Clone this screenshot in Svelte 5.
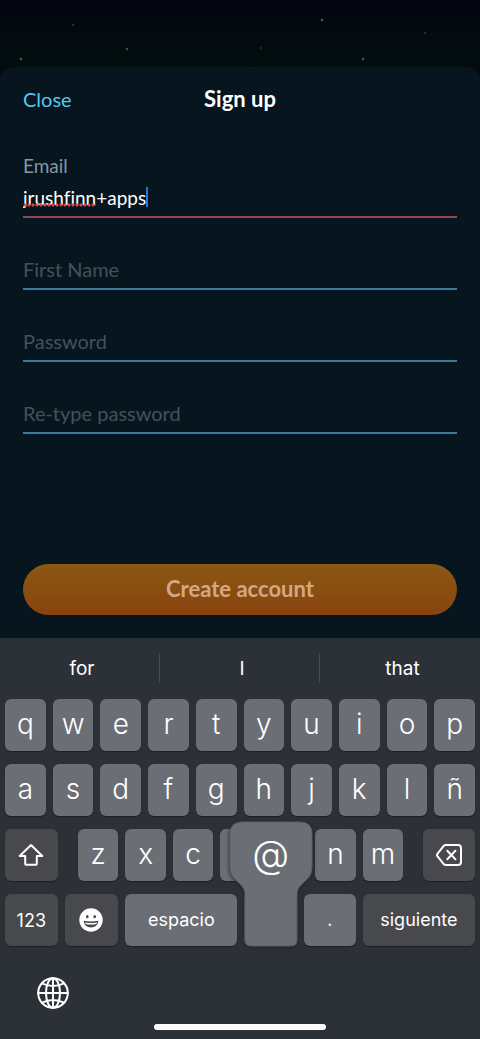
<script lang="ts">
  let email = $state('jrushfinn+apps');
  let firstName = $state('');
  let password = $state('');
  let confirmPassword = $state('');

  const stars = [
    { x: 21, y: 59, color: '#3f5f50' },
    { x: 73, y: 25, color: '#24312c' },
    { x: 127, y: 49, color: '#37503f' },
    { x: 261, y: 48, color: '#1d2a24' },
    { x: 322, y: 20, color: '#1f6f6a' },
    { x: 363, y: 59, color: '#136a6c' },
    { x: 425, y: 33, color: '#1f3029' }
  ];

  const suggestions = ['for', 'I', 'that'];
  const topRow = [...'qwertyuiop'];
  const homeRow = [...'asdfghjklñ'];
  const bottomRow = [...'zxcvbnm'];
  // these sit under the enlarged @ key
  const covered = ['v', 'b'];

  function type(key: string) {
    email += key;
  }

  function erase() {
    email = email.slice(0, -1);
  }
</script>

<div class="screen">
  <div class="sky">
    <svg class="stars" width="480" height="67" aria-hidden="true">
      {#each stars as star}
        <circle cx={star.x} cy={star.y} r="1.3" fill={star.color} />
      {/each}
    </svg>
  </div>

  <main class="sheet">
    <header>
      <button class="close">Close</button>
      <h1>Sign up</h1>
    </header>

    <form onsubmit={(e) => e.preventDefault()}>
      <div class="field active">
        <label for="email">Email</label>
        <div class="email-row">
          <input id="email" type="text" bind:value={email} spellcheck="false" />
          <div class="marks" aria-hidden="true">
            <span class="misspelled">{email.split('+')[0]}</span><span>{email.slice(email.split('+')[0].length)}</span><i class="caret"></i>
          </div>
        </div>
      </div>
      <div class="field">
        <input type="text" aria-label="First Name" placeholder="First Name" bind:value={firstName} />
      </div>
      <div class="field">
        <input type="password" aria-label="Password" placeholder="Password" bind:value={password} />
      </div>
      <div class="field">
        <input type="password" aria-label="Re-type password" placeholder="Re-type password" bind:value={confirmPassword} />
      </div>
      <button class="create" type="submit">Create account</button>
    </form>
  </main>

  <section class="keyboard" aria-label="Keyboard">
    <div class="suggestions">
      {#each suggestions as word}
        <button onclick={() => type(word)}>{word}</button>
      {/each}
    </div>

    <div class="keys">
      <div class="row letters">
        {#each topRow as key}
          <button class="key" onclick={() => type(key)}>{key}</button>
        {/each}
      </div>
      <div class="row letters">
        {#each homeRow as key}
          <button class="key" onclick={() => type(key)}>{key}</button>
        {/each}
      </div>
      <div class="row shift-row">
        <button class="key dark" aria-label="Shift">
          <svg width="26" height="24" viewBox="0 0 26 24">
            <path d="M13 2 L24.3 13 H18.8 V20.2 Q18.8 21.8 17.2 21.8 H8.8 Q7.2 21.8 7.2 20.2 V13 H1.7 Z" />
          </svg>
        </button>
        <div class="row letters">
          {#each bottomRow as key}
            <button class="key" aria-label={key} onclick={() => type(key)}>{covered.includes(key) ? '' : key}</button>
          {/each}
        </div>
        <button class="key dark" aria-label="Delete" onclick={erase}>
          <svg width="26" height="22" viewBox="0 0 26 22">
            <path d="M9.6 1 H22 Q25 1 25 4 V18 Q25 21 22 21 H9.6 Q8.6 21 7.9 20.3 L1.4 12.2 Q0.6 11 1.4 9.8 L7.9 1.7 Q8.6 1 9.6 1 Z" />
            <path d="M11.3 6.8 L19.4 15.2 M19.4 6.8 L11.3 15.2" />
          </svg>
        </button>
      </div>
      <div class="row space-row">
        <button class="key dark word">123</button>
        <button class="key dark" aria-label="Emoji">
          <svg class="smiley" width="24" height="24" viewBox="0 0 24 24">
            <circle cx="12" cy="12" r="11.7" fill="#fff" />
            <ellipse cx="8.3" cy="8.7" rx="1.3" ry="1.6" fill="#47494d" />
            <ellipse cx="15.7" cy="8.7" rx="1.3" ry="1.6" fill="#47494d" />
            <path d="M4.5 12.8 Q12 14.4 19.5 12.8 Q18.4 19.4 12 19.4 Q5.6 19.4 4.5 12.8 Z" fill="#47494d" />
            <path d="M6 14.4 Q12 15.6 18 14.4 L17.4 16 Q12 17.2 6.6 16 Z" fill="#fff" />
          </svg>
        </button>
        <button class="key word" onclick={() => type(' ')}>espacio</button>
        <button class="key pressed" onclick={() => type('@')}>
          <svg class="bubble" width="84" height="126" viewBox="0 0 84 126" aria-hidden="true">
            <path d="M13 1 H71 Q83 1 83 13 V46 Q83 55 76 60 L71 65 Q68 68 68 73 V119 Q68 125 62 125 H22 Q16 125 16 119 V73 Q16 68 12 64 L7 59 Q1 54 1 46 V13 Q1 1 13 1 Z" />
          </svg>
          <span class="at">@</span>
        </button>
        <button class="key word" onclick={() => type('.')}>.</button>
        <button class="key dark word next">siguiente</button>
      </div>
    </div>

    <div class="dock">
      <button class="globe" aria-label="Next keyboard">
        <svg width="32" height="32" viewBox="0 0 32 32">
          <circle cx="16" cy="16" r="14.8" />
          <ellipse cx="16" cy="16" rx="7" ry="14.8" />
          <path d="M16 1.2 V30.8 M1.2 16 H30.8 M5 6.4 Q16 11.6 27 6.4 M5 25.6 Q16 20.4 27 25.6" />
        </svg>
      </button>
      <div class="home-bar"></div>
    </div>
  </section>
</div>

<style>
  :global(body) {
    margin: 0;
    background: #2c3138;
  }

  .screen {
    background: linear-gradient(#02050f 0, #020c10 40px, #020d0f 90px);
    font-family: Lato, sans-serif;
    overflow: hidden;
  }

  button {
    padding: 0;
    border: none;
    background: none;
    color: #fff;
    font-family: inherit;
    cursor: pointer;
  }

  .sky {
    height: 67px;
  }

  .stars {
    display: block;
  }

  .sheet {
    position: relative;
    padding: 0 23px 23px;
    background: #07151f;
    border-radius: 14px 14px 0 0;
  }

  header {
    display: grid;
    grid-template-columns: 1fr auto 1fr;
    align-items: center;
    height: 63px;
  }

  .close {
    justify-self: start;
    color: #55c8f2;
    font-size: 20px;
  }

  h1 {
    margin: 0;
    color: #fff;
    font-size: 22px;
    font-weight: 700;
  }

  form {
    display: flex;
    flex-direction: column;
    padding-top: 23px;
  }

  .field {
    display: flex;
    flex-direction: column;
    justify-content: flex-end;
    height: 70px;
    border-bottom: 2px solid #3b7a99;
  }

  .field.active {
    height: 63px;
    border-bottom-color: #934751;
  }

  label {
    color: #8497a3;
    font-size: 19px;
    line-height: 24px;
  }

  input {
    display: block;
    box-sizing: border-box;
    width: 100%;
    height: 38px;
    padding: 0;
    border: none;
    outline: none;
    background: none;
    color: #fff;
    font-family: inherit;
    font-size: 20px;
  }

  input::placeholder {
    color: #43515c;
    opacity: 1;
  }

  .email-row {
    position: relative;
  }

  .email-row input,
  .marks {
    font-size: 19px;
    font-variant-ligatures: none;
  }

  /* spelling dots and caret drawn over the text box */
  .marks {
    position: absolute;
    inset: 0;
    display: flex;
    align-items: center;
    color: transparent;
    line-height: 20px;
    white-space: pre;
    pointer-events: none;
  }

  .misspelled {
    background: radial-gradient(circle, #e5483f 1px, #e5483f 1px, transparent 2px) left bottom / 4px 4px repeat-x;
  }

  .caret {
    width: 2px;
    height: 20px;
    background: #2377e0;
  }

  .create {
    height: 51px;
    margin-top: 130px;
    padding-bottom: 2px;
    border-radius: 26px;
    background: linear-gradient(#8b5812, #884310);
    color: #d3a883;
    font-size: 22px;
    font-weight: 700;
  }

  .keyboard {
    background: #2c3138;
    font-family: Inter, sans-serif;
  }

  .suggestions {
    display: grid;
    grid-template-columns: repeat(3, 1fr);
    height: 30px;
    padding: 15px 0 16px;
  }

  .suggestions button {
    padding-left: 5px;
    border-right: 1px solid #484d54;
    font-size: 19px;
  }

  .suggestions button:last-child {
    border-right: none;
  }

  .keys {
    display: grid;
    gap: 13px;
    padding: 0 5px;
  }

  .row {
    display: grid;
    gap: 7px;
  }

  .letters {
    grid-auto-flow: column;
    grid-auto-columns: minmax(0, 1fr);
  }

  .shift-row {
    grid-template-columns: 53fr 326fr 52fr;
    gap: 20px;
  }

  .space-row {
    grid-template-columns: 53fr 54fr 113fr 53fr 52fr 113fr;
  }

  .key {
    display: flex;
    align-items: center;
    justify-content: center;
    min-width: 0;
    height: 52px;
    padding-bottom: 2px;
    border-radius: 6px;
    background: #6b6e75;
    box-shadow: 0 1px 1px #1c2025;
    font-size: 28px;
    font-weight: 300;
  }

  .dark {
    padding-bottom: 0;
    background: #47494d;
  }

  .word {
    font-size: 18px;
    font-weight: 400;
  }

  .next {
    padding-bottom: 2px;
  }

  svg {
    fill: none;
    stroke: #fff;
    stroke-width: 2;
    stroke-linecap: round;
    stroke-linejoin: round;
  }

  .stars,
  .smiley {
    stroke: none;
  }

  .pressed {
    position: relative;
  }

  /* enlarged preview of the key being pressed */
  .bubble {
    position: absolute;
    bottom: -1px;
    left: 50%;
    transform: translateX(-50%);
    fill: #6b6e75;
    stroke: #5b5e64;
    stroke-width: 1;
    filter: drop-shadow(0 1px 2px #22262b);
  }

  .at {
    position: absolute;
    bottom: 69px;
    left: 0;
    right: 0;
    font-size: 38px;
    line-height: 46px;
  }

  .dock {
    padding: 31px 0 9px;
  }

  .globe {
    display: block;
    margin-left: 37px;
  }

  .globe svg {
    display: block;
  }

  .home-bar {
    width: 36%;
    height: 6px;
    margin: 15px auto 0;
    border-radius: 3px;
    background: #fff;
  }
</style>
